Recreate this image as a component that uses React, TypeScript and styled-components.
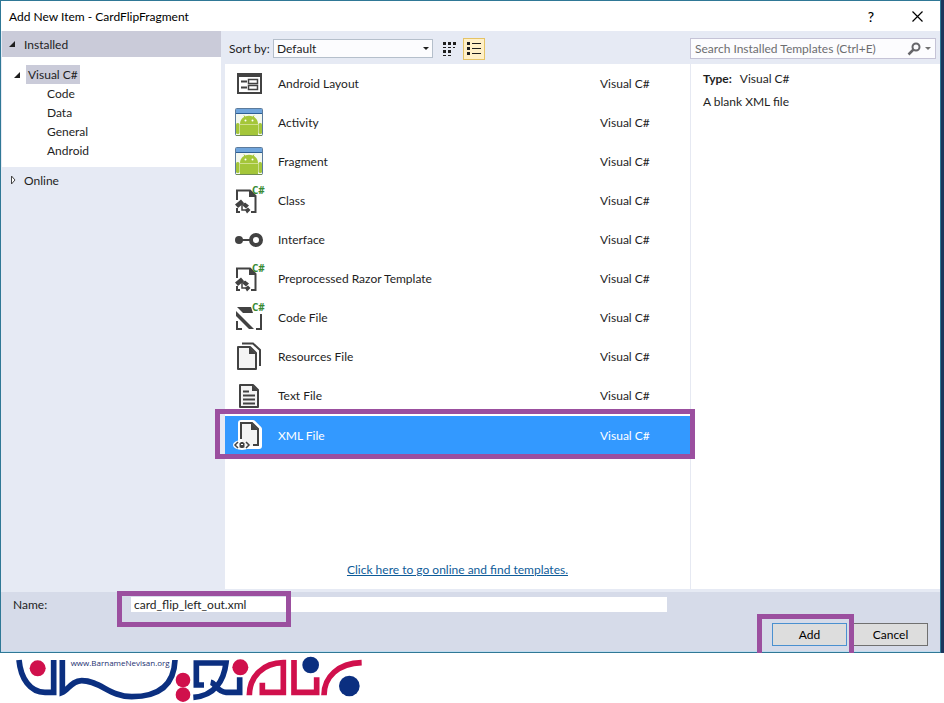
import React from "react";
import styled, { createGlobalStyle, css } from "styled-components";

const teal = "#2f7896";
const ink = "#1e1e1e";
const purple = "#9b4f9f";
const glyph = "#424242";

const GlobalStyle = createGlobalStyle`
  * { box-sizing: border-box; }
  body { margin: 0; background: #fff; }
  body, button, input, select { font: 12px/19px Lato, "Open Sans", sans-serif; color: ${ink}; }
`;

const Page = styled.div`
  min-height: 100vh;
  display: flex;
  flex-direction: column;
`;

const Desktop = styled.div`
  flex: 1;
  display: flex;
  background: #1b365d;
  padding-right: 3px;
`;

const Dialog = styled.section`
  flex: 1;
  min-width: 0;
  display: flex;
  flex-direction: column;
  background: #e6eaf4;
  border: 1px solid ${teal};
`;

const TitleBar = styled.header`
  display: flex;
  align-items: center;
  height: 30px;
  padding-left: 8px;
  background: #fff;
`;

const Title = styled.h1`
  flex: 1;
  margin: 0;
  font-size: 12px;
  font-weight: 400;
  color: #000;
`;

const CaptionButton = styled.button`
  display: flex;
  align-items: center;
  justify-content: center;
  width: 46px;
  height: 28px;
  padding: 0;
  border: 0;
  background: none;
  font-size: 14px;
  font-weight: 500;
  color: #000;
`;

const Body = styled.div`
  flex: 1;
  display: flex;
  gap: 4px;
  padding: 0 0 3px 1px;
`;

const Sidebar = styled.nav`
  width: 219px;
  flex: none;
`;

const SectionHeader = styled.button<{ $active?: boolean }>`
  display: flex;
  align-items: center;
  gap: 8px;
  width: 100%;
  height: 26px;
  padding: 0 6px;
  border: 0;
  background: ${(p) => (p.$active ? "#cacbd9" : "transparent")};
  text-align: left;
`;

const Tree = styled.ul`
  margin: 0;
  padding: 8px 0 7px;
  list-style: none;
  background: #fff;
`;

const TreeItem = styled.li<{ $nested?: boolean }>`
  display: flex;
  align-items: center;
  gap: 5px;
  height: 19px;
  padding-left: ${(p) => (p.$nested ? "45px" : "11px")};
`;

const TreeLabel = styled.span<{ $selected?: boolean }>`
  padding: 0 2px;
  margin-left: ${(p) => (p.$selected ? "0" : "-2px")};
  background: ${(p) => (p.$selected ? "#cacbd9" : "transparent")};
`;

const Main = styled.div`
  flex: 1;
  min-width: 0;
  display: flex;
  flex-direction: column;
`;

const Toolbar = styled.div`
  display: flex;
  align-items: center;
  height: 33px;
  padding: 2px 4px 0;
`;

const SortLabel = styled.label`
  width: 44px;
  white-space: nowrap;
`;

const SelectWrap = styled.div`
  display: grid;
  align-items: center;
  width: 160px;
  margin-right: 5px;
  & > * { grid-area: 1 / 1; }
  & > svg { justify-self: end; margin-right: 4px; pointer-events: none; }
`;

const SortSelect = styled.select`
  appearance: none;
  width: 100%;
  height: 19px;
  padding: 0 3px;
  border: 1px solid #b5bfcb;
  border-radius: 0;
  background: #fcfcfe;
  line-height: 17px;
`;

const ViewButton = styled.button<{ $active?: boolean }>`
  display: flex;
  align-items: center;
  justify-content: center;
  width: 22px;
  height: 22px;
  margin-right: 3px;
  padding: 0;
  border: 1px solid ${(p) => (p.$active ? "#e5c365" : "transparent")};
  background: ${(p) => (p.$active ? "#fff0c8" : "transparent")};
`;

const SearchBox = styled.div`
  display: flex;
  align-items: center;
  width: 246px;
  height: 21px;
  margin-left: auto;
  padding: 0 4px;
  border: 1px solid #c5c3d6;
  background: #fcfcfe;
`;

const SearchInput = styled.input`
  flex: 1;
  min-width: 0;
  padding: 0;
  border: 0;
  outline: 0;
  background: none;
  &::placeholder { color: #6d6d70; opacity: 1; }
`;

const SearchButton = styled.button`
  display: flex;
  align-items: center;
  gap: 4px;
  padding: 0;
  border: 0;
  background: none;
`;

const Content = styled.div`
  flex: 1;
  display: flex;
  background: #fff;
`;

const ListPane = styled.div`
  flex: 1;
  min-width: 0;
  display: flex;
  flex-direction: column;
  justify-content: space-between;
  border-right: 1px solid #e6e9f2;
`;

const Templates = styled.ul`
  margin: 0;
  padding: 0;
  list-style: none;
`;

const TemplateRow = styled.li<{ $selected?: boolean }>`
  position: relative;
  display: flex;
  align-items: center;
  height: 39px;
  padding-left: 9px;
  ${(p) =>
    p.$selected &&
    css`
      border-top: 1px solid #fff;
      background: #3399ff;
      color: #fff;
    `}
`;

const IconSlot = styled.span`
  display: flex;
  width: 44px;
  padding-bottom: 2px;
`;

const TemplateName = styled.span`
  flex: 1;
`;

const TemplateLanguage = styled.span`
  width: 90px;
`;

const OnlineLink = styled.a`
  align-self: center;
  margin-bottom: 10px;
  color: #0e5c99;
  text-decoration: underline;
`;

const Details = styled.aside`
  width: 249px;
  flex: none;
  padding: 5px 12px;
`;

const DetailLine = styled.p`
  margin: 0 0 4px;
`;

const DetailTerm = styled.strong`
  margin-right: 8px;
`;

const Footer = styled.footer`
  display: flex;
  flex-direction: column;
  justify-content: space-between;
  height: 60px;
  padding: 4px 12px 5px;
  background: #d6dbe9;
  border-bottom: 1px solid #bfdcf0;
`;

const NameRow = styled.div`
  display: flex;
  align-items: center;
  height: 17px;
`;

const NameLabel = styled.label`
  width: 118px;
`;

const NameField = styled.div`
  position: relative;
  display: flex;
  flex: 0 1 536px;
`;

const NameInput = styled.input`
  width: 100%;
  height: 15px;
  padding: 0 3px;
  border: 0;
  outline: 0;
  background: #fff;
  line-height: 15px;
`;

const Actions = styled.div`
  display: flex;
  justify-content: flex-end;
  gap: 6px;
`;

const ActionSlot = styled.div`
  position: relative;
`;

const ActionButton = styled.button<{ $primary?: boolean }>`
  display: block;
  width: 75px;
  height: 23px;
  padding: 0;
  border: 1px solid ${(p) => (p.$primary ? "#4a90d0" : "#707070")};
  background: #dddddd;
  color: #000;
`;

const Marker = styled.span<{ $inset: string; $open?: boolean }>`
  position: absolute;
  z-index: 1;
  inset: ${(p) => p.$inset};
  border: 5px solid ${purple};
  ${(p) => p.$open && "border-bottom: 0;"}
  pointer-events: none;
`;

const Brand = styled.div`
  height: 50px;
  overflow: hidden;
`;

const Caret = ({ color = "#1e1e1e" }: { color?: string }) => (
  <svg width="6" height="3" viewBox="0 0 6 3" aria-hidden="true">
    <path d="M0 0H6L3 3Z" fill={color} />
  </svg>
);

const Expanded = () => (
  <svg width="8" height="8" viewBox="0 0 8 8" aria-hidden="true">
    <path d="M7 1V7H1Z" fill={ink} />
  </svg>
);

const Collapsed = () => (
  <svg width="8" height="10" viewBox="0 0 8 10" aria-hidden="true">
    <path d="M3.500 1V9L7 5Z" fill="#fff" stroke="#444" />
  </svg>
);

const SharpTag = () => (
  <text x="17" y="8" fontSize="10" fontWeight="700" fontFamily="Open Sans, sans-serif" fill="#388a34">
    C#
  </text>
);

const LayoutIcon = () => (
  <>
    <path d="M2 4H27V25H2Z" fill={glyph} />
    <path d="M4 8H25V23H4Z" fill="#fff" />
    <path d="M6 12.500H12M6 18.500H12" stroke={glyph} strokeWidth="2" />
    <path d="M13.500 10.500H22.500V14.500H13.500ZM13.500 16.500H22.500V20.500H13.500Z" fill="#fff" stroke={glyph} strokeWidth="1.500" />
  </>
);

const AndroidIcon = () => (
  <>
    <rect x="0.500" y="0.500" width="27" height="27" rx="1" fill="#f4f8ef" stroke="#5c7b9c" />
    <path d="M1 1H27V5H1Z" fill="#70a5dc" />
    <path d="M1 5.500H27" stroke="#2f5f94" />
    <path d="M5 16C5 5 23 5 23 16Z" fill="#a4c639" />
    <path d="M9 7.500L10.500 10.500M19 7.500L17.500 10.500" stroke="#a4c639" />
    <path d="M5 17H23V27H5Z" fill="#a4c639" />
    <rect x="1" y="15" width="3.500" height="11" rx="1.500" fill="#a4c639" />
    <rect x="23.500" y="15" width="3.500" height="11" rx="1.500" fill="#a4c639" />
    <path d="M5 16.500H23" stroke="#cfe08c" />
    <circle cx="10.500" cy="12.500" r="1" fill="#fff" />
    <circle cx="17.500" cy="12.500" r="1" fill="#fff" />
    <path d="M1 27.500H27" stroke="#6f8b52" />
  </>
);

const ClassIcon = () => (
  <>
    <path d="M2 14V4.500H15L20.500 10V26H16" fill="none" stroke={glyph} strokeWidth="2" />
    <path d="M14 4V11H21Z" fill={glyph} />
    <path d="M2 22V26H5" fill="none" stroke={glyph} strokeWidth="2" />
    <path d="M0 18.500L6 13.500L9 17L3 22ZM10 16.500L14 19.500L11 22.500L7.500 19.500ZM10 24L13 21.500L15.500 24L12 27.500Z" fill={glyph} />
    <path d="M5 18H11M7 18V24H12" fill="none" stroke={glyph} strokeWidth="1.500" />
    <SharpTag />
  </>
);

const InterfaceIcon = () => (
  <>
    <circle cx="4" cy="15" r="4" fill={glyph} />
    <path d="M7 15H16" stroke={glyph} strokeWidth="2" />
    <circle cx="21" cy="15" r="5" fill="#fff" stroke={glyph} strokeWidth="4" />
  </>
);

const CodeIcon = () => (
  <>
    <path d="M2 4H16L18 10H8Z" fill={glyph} />
    <path d="M1 8L19 26H14L1 13Z" fill={glyph} />
    <path d="M2 18V26H7M26 11V26H21" fill="none" stroke={glyph} strokeWidth="2" />
    <SharpTag />
  </>
);

const ResourcesIcon = () => (
  <>
    <path d="M7 1.500H18L25 8V24" fill="none" stroke={glyph} strokeWidth="2" />
    <path d="M3 5H15L21 11V27H3Z" fill="#f4f4f4" stroke={glyph} strokeWidth="2" strokeLinejoin="round" />
    <path d="M14 5V12H21Z" fill={glyph} />
  </>
);

const TextIcon = () => (
  <>
    <path d="M5 4H18L23 9V26H5Z" fill="#f4f4f4" stroke={glyph} strokeWidth="2" strokeLinejoin="round" />
    <path d="M17 4V10H23Z" fill={glyph} />
    <path d="M8 10.500H14M8 14.500H20M8 18.500H20M8 22.500H20" stroke={glyph} strokeWidth="2" />
  </>
);

const XmlIcon = () => (
  <>
    <path d="M6 3H18L24 9V26H6Z" fill="none" stroke="#fff" strokeWidth="6" strokeLinejoin="round" />
    <ellipse cx="7" cy="25" rx="9" ry="5" fill="#fff" />
    <path d="M6 19V3H17L23 9V25H18" fill="#f4f4f4" stroke={glyph} strokeWidth="2" />
    <path d="M7 18H18V26H7Z" fill="#f4f4f4" />
    <path d="M16 3V10H23Z" fill={glyph} />
    <path d="M3 22L0 25L3 28M11 22L14 25L11 28" fill="none" stroke={glyph} strokeWidth="1.500" />
    <path d="M4.500 23H9.500V27.500H4.500ZM5.500 22H8.500V28H5.500Z" fill={glyph} />
    <path d="M6 24.500H8" stroke="#fff" />
  </>
);

const templates = [
  { name: "Android Layout", icon: LayoutIcon },
  { name: "Activity", icon: AndroidIcon },
  { name: "Fragment", icon: AndroidIcon },
  { name: "Class", icon: ClassIcon },
  { name: "Interface", icon: InterfaceIcon },
  { name: "Preprocessed Razor Template", icon: ClassIcon },
  { name: "Code File", icon: CodeIcon },
  { name: "Resources File", icon: ResourcesIcon },
  { name: "Text File", icon: TextIcon },
  { name: "XML File", icon: XmlIcon, selected: true },
];

const BrandLogo = () => (
  <svg width="370" height="50" viewBox="0 9 1110 150" role="img" aria-label="Barname Nevisan">
    <g fill="none" stroke="#0b2f80" strokeWidth="17">
      <path d="M57 30C62 85 90 127 135 127H161V30" />
      <path d="M187 30V127C205 120 215 92 245 92C300 92 330 140 395 140C470 140 522 110 525 30" />
      <path d="M612 105H589V39H678C672 90 645 138 580 142" />
      <path d="M632 97C648 100 652 127 678 127H719V82" />
    </g>
    <g fill="none" stroke="#d0104c" strokeWidth="17">
      <path d="M748 136C748 80 790 38 850 38V127H787V98" />
      <path d="M882 30V127H950V82" />
      <path d="M972 136C972 80 1015 40 1085 38" />
    </g>
    <g fill="#d0104c">
      <circle cx="113" cy="55" r="24" />
      <circle cx="549" cy="90" r="22" />
      <circle cx="549" cy="134" r="22" />
      <circle cx="721" cy="52" r="24" />
    </g>
    <circle cx="932" cy="45" r="25" fill="#0b2f80" />
    <circle cx="1048" cy="108" r="31" fill="#0b2f80" />
    <text x="212" y="48" fontSize="24" fontWeight="400" fontFamily="Open Sans, sans-serif" fill="#1c2f70">
      www.BarnameNevisan.org
    </text>
  </svg>
);

export default function App() {
  return (
    <Page>
      <GlobalStyle />
      <Desktop>
        <Dialog aria-labelledby="dialog-title">
          <TitleBar>
            <Title id="dialog-title">Add New Item - CardFlipFragment</Title>
            <CaptionButton aria-label="Help">?</CaptionButton>
            <CaptionButton aria-label="Close">
              <svg width="11" height="11" viewBox="0 0 11 11" aria-hidden="true">
                <path d="M0.500 0.500L10.500 10.500M10.500 0.500L0.500 10.500" stroke="#000" strokeWidth="1.200" />
              </svg>
            </CaptionButton>
          </TitleBar>
          <Body>
            <Sidebar aria-label="Template categories">
              <SectionHeader $active aria-expanded="true">
                <Expanded />
                Installed
              </SectionHeader>
              <Tree>
                <TreeItem>
                  <Expanded />
                  <TreeLabel $selected>Visual C#</TreeLabel>
                </TreeItem>
                {["Code", "Data", "General", "Android"].map((label) => (
                  <TreeItem key={label} $nested>
                    <TreeLabel>{label}</TreeLabel>
                  </TreeItem>
                ))}
              </Tree>
              <SectionHeader aria-expanded="false">
                <Collapsed />
                Online
              </SectionHeader>
            </Sidebar>
            <Main>
              <Toolbar>
                <SortLabel htmlFor="sort">Sort by:</SortLabel>
                <SelectWrap>
                  <SortSelect id="sort">
                    <option>Default</option>
                  </SortSelect>
                  <Caret />
                </SelectWrap>
                <ViewButton aria-label="Small icons">
                  <svg width="14" height="14" viewBox="0 0 14 14" aria-hidden="true">
                    <path d="M1 0H4V3H1ZM6 0H9V3H6ZM11 0H14V3H11ZM1 8H4V11H1ZM6 8H9V11H6Z" fill={ink} />
                    <path d="M1 5.500H4M6 5.500H9M11 5.500H13M1 13.500H4M6 13.500H9" stroke={ink} />
                  </svg>
                </ViewButton>
                <ViewButton $active aria-label="Medium icons" aria-pressed="true">
                  <svg width="14" height="14" viewBox="0 0 14 14" aria-hidden="true">
                    <path d="M0 0H3V3H0ZM0 5H3V8H0ZM0 10H3V13H0Z" fill={ink} />
                    <path d="M5 1.500H14M5 6.500H14M5 11.500H14" stroke={ink} />
                  </svg>
                </ViewButton>
                <SearchBox>
                  <SearchInput aria-label="Search installed templates" placeholder="Search Installed Templates (Ctrl+E)" />
                  <SearchButton aria-label="Search">
                    <svg width="14" height="14" viewBox="0 0 14 14" aria-hidden="true">
                      <circle cx="9" cy="5" r="3.500" fill="none" stroke="#66666a" strokeWidth="2" />
                      <path d="M6.500 7.500L1.500 12.500" stroke="#66666a" strokeWidth="2.500" />
                    </svg>
                    <Caret color="#717171" />
                  </SearchButton>
                </SearchBox>
              </Toolbar>
              <Content>
                <ListPane>
                  <Templates>
                    {templates.map(({ name, icon: Icon, selected }) => (
                      <TemplateRow key={name} $selected={selected}>
                        <IconSlot>
                          <svg width="30" height="30" viewBox="-1 -1 30 30" overflow="visible" aria-hidden="true">
                            <Icon />
                          </svg>
                        </IconSlot>
                        <TemplateName>{name}</TemplateName>
                        <TemplateLanguage>Visual C#</TemplateLanguage>
                        {selected && <Marker $inset="-7px -5px -5px -10px" />}
                      </TemplateRow>
                    ))}
                  </Templates>
                  <OnlineLink href="#online">Click here to go online and find templates.</OnlineLink>
                </ListPane>
                <Details>
                  <DetailLine>
                    <DetailTerm>Type:</DetailTerm>
                    Visual C#
                  </DetailLine>
                  <DetailLine>A blank XML file</DetailLine>
                </Details>
              </Content>
            </Main>
          </Body>
          <Footer>
            <NameRow>
              <NameLabel htmlFor="item-name">Name:</NameLabel>
              <NameField>
                <NameInput id="item-name" defaultValue="card_flip_left_out.xml" />
                <Marker $inset="-6px 376px -15px -14px" />
              </NameField>
            </NameRow>
            <Actions>
              <ActionSlot>
                <ActionButton $primary>Add</ActionButton>
                <Marker $inset="-9px -7px -7px -15px" $open />
              </ActionSlot>
              <ActionButton>Cancel</ActionButton>
            </Actions>
          </Footer>
        </Dialog>
      </Desktop>
      <Brand>
        <BrandLogo />
      </Brand>
    </Page>
  );
}
